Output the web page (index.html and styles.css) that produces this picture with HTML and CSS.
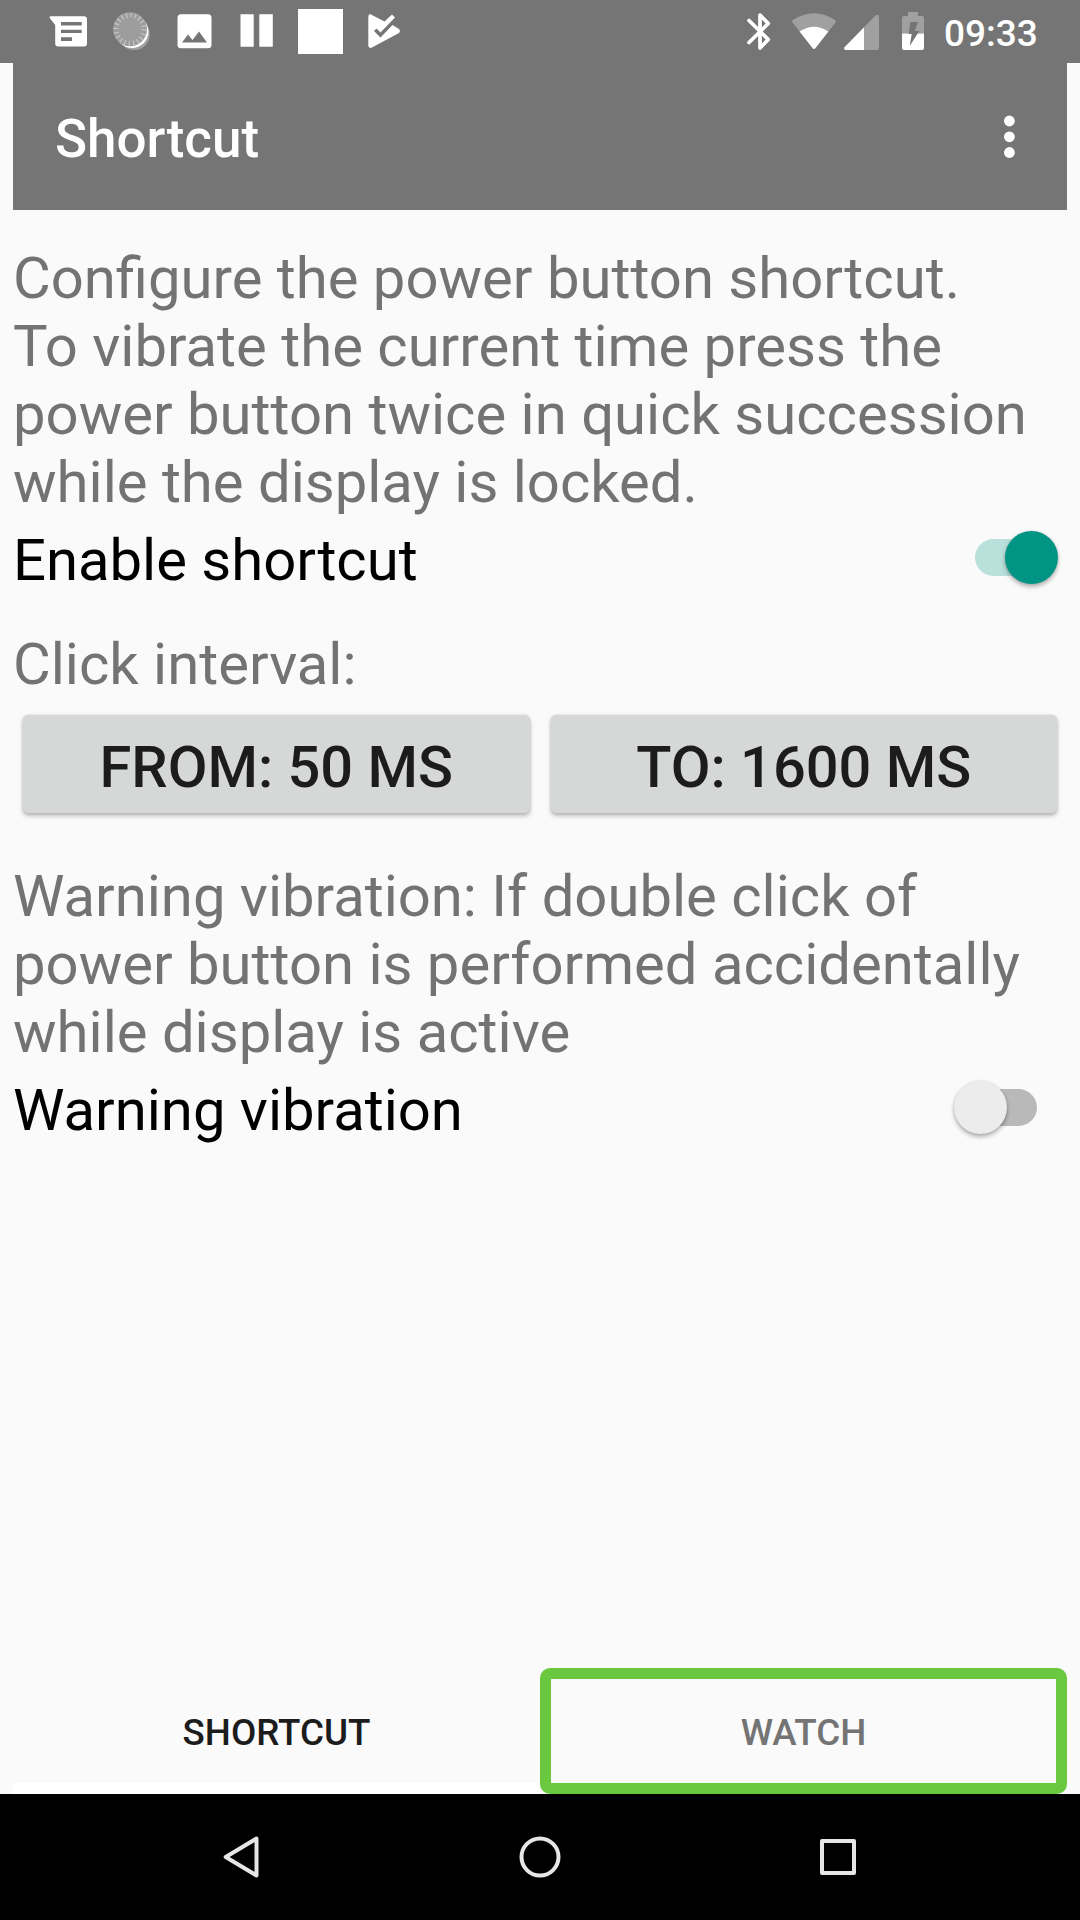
FILE: index.html
```html
<!DOCTYPE html>
<html lang="en">
<head>
<meta charset="utf-8">
<title>Shortcut</title>
<link rel="stylesheet" href="styles.css">
</head>
<body>
<div class="screen">
  <header class="status-bar">
    <svg class="status-icons" width="410" height="63" viewBox="0 0 410 63" aria-hidden="true">
      <path fill="#fff" fill-rule="evenodd" d="M49.500 16.300H84a3 3 0 0 1 3 3V43.500a3 3 0 0 1-3 3H58.200a3 3 0 0 1-3-3V25L49.700 18Q49 16.300 50.500 16.300zM61 22v3.600h20.700V22zM61 29.700v3.300h20.700v-3.300zM61 37.300v3.700h11v-3.700z"/>
      <circle cx="134" cy="34.300" r="15.800" fill="#a0a0a0"/>
      <circle cx="132" cy="31.600" r="16.400" fill="#fff"/>
      <circle cx="130" cy="29.300" r="17" fill="#9d9d9d"/>
      <circle cx="130" cy="29.300" r="14" fill="none" stroke="#c5c5c5" stroke-width="5" stroke-dasharray="1.200 3.198"/>
      <path fill="#fff" fill-rule="evenodd" d="M181 14.300h27a3.500 3.500 0 0 1 3.500 3.500v27a3.500 3.500 0 0 1-3.500 3.500h-27a3.500 3.500 0 0 1-3.500-3.500v-27a3.500 3.500 0 0 1 3.500-3.500zM182 42.500h25L199 31.500l-6.500 8.500-4.500-5.500z"/>
      <path fill="#fff" d="M240.500 14.300h13.200v32.500h-13.200zM259.300 14.300h13.500v32.500h-13.500zM298 9h45v45h-45z"/>
      <path fill="#fff" d="M370 14l14.500 7.500 7.500-7 3 3-14.500 15-4-4-2.500 2.500 6.500 6.500L392.500 25l6.500 4q1.800 2.300 0 4L371 48q-2.700 0-2.700-2.700V16.500q0-1.800 1.700-2.500z"/>
    </svg>
    <div class="status-right">
      <svg width="200" height="63" viewBox="740 0 200 63" aria-hidden="true">
        <path fill="none" stroke="#fff" stroke-width="3.700" stroke-linejoin="round" stroke-linecap="round" d="M749 20.500L768.300 39.500 760 48V15l8.300 8.500L749 42.500"/>
        <path fill="#a0a0a0" d="M792.500 22.500a2 2 0 0 1 .3-2.500q21-13.500 42.400 0a2 2 0 0 1 .3 2.500L815.500 48q-1.500 2-3 0z"/>
        <path fill="#fff" d="M799.600 31.500Q814 22 828.400 31.500L815.500 48q-1.500 2-3 0z"/>
        <path fill="#a0a0a0" d="M864 27.200L875.500 15.500Q879 13.500 879 17V48q0 2-2 2H864z"/>
        <path fill="#fff" d="M864 27.200V50H845q-1.500-1-.500-2.700z"/>
        <path fill="#a0a0a0" d="M908 12h10v4h4q2 0 2 2v15.500h-22V18q0-2 2-2h4z"/>
        <path fill="#fff" d="M902 33.500h22V48q0 2-2 2h-18q-2 0-2-2z"/>
        <path fill="#757575" d="M910.300 22h7.700l-3.200 9h4.500L909.700 46l2-12h-3z"/>
      </svg>
      <span class="clock">09:33</span>
    </div>
  </header>

  <main class="content">
    <div class="toolbar">
      <h1 class="title">Shortcut</h1>
      <svg class="overflow" width="12" height="44" viewBox="0 0 12 44" fill="#fff" aria-label="More options">
        <circle cx="6.400" cy="6" r="5.400"/><circle cx="6.400" cy="21.800" r="5.400"/><circle cx="6.400" cy="37.500" r="5.400"/>
      </svg>
    </div>

    <p class="text intro">Configure the power button shortcut.<br>To vibrate the current time press the<br>power button twice in quick succession<br>while the display is locked.</p>
    <div class="switch-row">
      <span>Enable shortcut</span>
      <span class="switch on"><span class="track"></span><span class="thumb"></span></span>
    </div>

    <p class="text interval">Click interval:</p>
    <div class="buttons">
      <button class="button">FROM: 50 MS</button>
      <button class="button">TO: 1600 MS</button>
    </div>

    <p class="text warning">Warning vibration: If double click of<br>power button is performed accidentally<br>while display is active</p>
    <div class="switch-row">
      <span>Warning vibration</span>
      <span class="switch off"><span class="track"></span><span class="thumb"></span></span>
    </div>
  </main>

  <nav class="tabs">
    <div class="tab tab-active">SHORTCUT</div>
    <div class="tab tab-focused">WATCH</div>
  </nav>

  <footer class="nav-bar">
    <svg width="1080" height="126" viewBox="0 0 1080 126" fill="none" stroke="#e6e6e6" stroke-width="4" stroke-linejoin="round" aria-hidden="true">
      <path d="M256.500 44.500v37L225.700 63z"/>
      <circle cx="540" cy="63" r="18.500"/>
      <rect x="822" y="47" width="32" height="32"/>
    </svg>
  </footer>
</div>
</body>
</html>
```
FILE: styles.css
```css
* { box-sizing: border-box; }

body {
  margin: 0;
  font-family: Roboto, "Liberation Sans", sans-serif;
  background: #fafafa;
}

.screen {
  width: 1080px;
  height: 1920px;
  display: flex;
  flex-direction: column;
  overflow: hidden;
}

svg { display: block; }

.status-bar {
  height: 63px;
  flex: none;
  display: flex;
  justify-content: space-between;
  background: #757575;
}

.status-right { display: flex; }

.clock {
  width: 140px;
  padding: 12px 0 0 4px;
  font-size: 37px;
  font-weight: 500;
  line-height: 43px;
  color: #fff;
}

.content {
  flex: 1;
  padding: 0 13px;
}

.toolbar {
  height: 147px;
  display: flex;
  align-items: center;
  justify-content: space-between;
  padding: 0 52px 0 42px;
  background: #757575;
  color: #fff;
}

.title {
  margin: 5px 0 0;
  font-size: 53px;
  font-weight: 500;
  line-height: 62px;
}

.overflow { margin-top: 1px; }

.text {
  margin: 0;
  font-size: 58px;
  line-height: 68px;
  color: #737373;
  white-space: nowrap;
}

.intro { padding-top: 34px; }

.switch-row {
  display: flex;
  align-items: center;
  justify-content: space-between;
  height: 84px;
  font-size: 58px;
  line-height: 68px;
  padding-top: 4px;
  color: #000;
}

.switch {
  display: flex;
  align-items: center;
  height: 54px;
  margin-top: -6px;
}

.track {
  width: 62px;
  height: 37px;
  border-radius: 19px;
}

.thumb {
  position: relative;
  width: 53px;
  height: 53px;
  border-radius: 50%;
  box-shadow: 0 3px 4px rgba(0, 0, 0, 0.28), 0 0 3px rgba(0, 0, 0, 0.12);
}

.on { margin-right: 9px; }
.on .track { background: #b9e0db; margin-right: -32px; }
.on .thumb { background: #009485; }

.off { flex-direction: row-reverse; margin-right: 30px; }
.off .track { background: #b9b9b9; margin-left: -32px; }
.off .thumb { background: #ececec; }

.interval { padding-top: 30px; }

.buttons {
  display: flex;
  gap: 21px;
  padding: 17px 10px 0;
}

.button {
  flex: 1;
  height: 98px;
  padding: 6px 0 0;
  border: 0;
  border-radius: 5px;
  background: #d6d8d7;
  box-shadow: 0 3px 4px rgba(0, 0, 0, 0.25), 0 0 3px rgba(0, 0, 0, 0.12);
  font: 500 57.75px/68px Roboto, "Liberation Sans", sans-serif;
  color: #1c1c1c;
}

.warning { padding-top: 49px; }

.tabs {
  display: flex;
  flex: none;
  height: 126px;
  padding: 0 13px;
}

.tab {
  width: 527px;
  padding-top: 43px;
  font-size: 36.75px;
  font-weight: 500;
  line-height: 43px;
  text-align: center;
  color: #747474;
}

.tab-active {
  border-bottom: 11px solid #fff;
  color: #1c1c1c;
}

.tab-focused {
  padding-top: 32px;
  border: 11px solid #6ac740;
  border-radius: 10px;
}

.nav-bar {
  height: 126px;
  flex: none;
  background: #000;
}
```
